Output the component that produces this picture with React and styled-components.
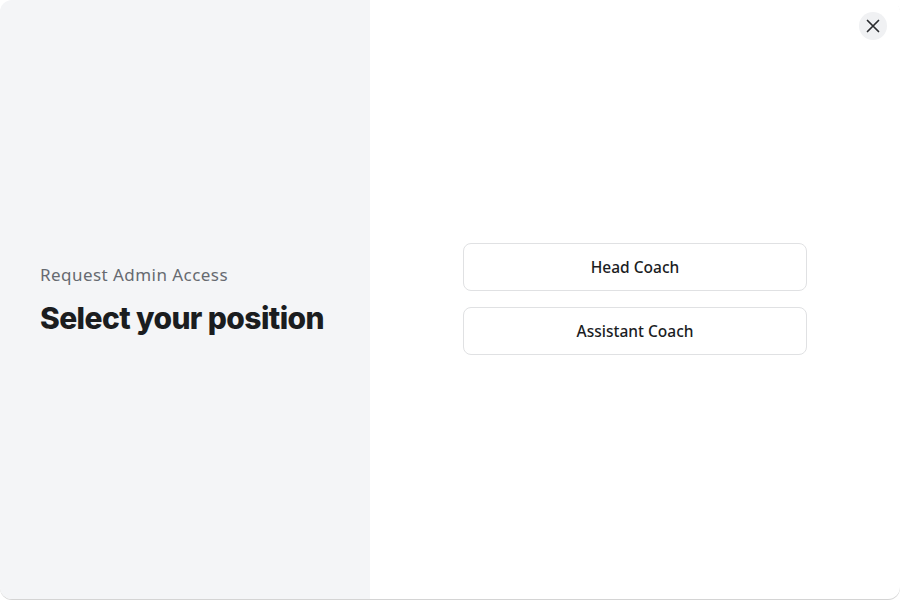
import React from "react";
import styled, { createGlobalStyle } from "styled-components";

const Global = createGlobalStyle`
  html, body { margin: 0; padding: 0; background: #ffffff; }
  body { font-family: "Noto Sans", Inter, sans-serif; }
  #root { width: 900px; height: 600px; }
`;

const Modal = styled.div`
  position: relative;
  width: 900px;
  height: 599px;
  display: flex;
  border-radius: 12px;
  overflow: hidden;
  background: #ffffff;
  box-shadow: 0 1px 0 #d4d4d4;
`;

const Side = styled.div`
  width: 370px;
  flex-shrink: 0;
  background: #f4f5f7;
  display: flex;
  flex-direction: column;
  justify-content: center;
  padding: 0 40px;
  box-sizing: border-box;
`;

const Eyebrow = styled.div`
  font-family: "Noto Sans", sans-serif;
  font-size: 17px;
  letter-spacing: 0.45px;
  color: #666a70;
  line-height: 24px;
  margin-top: 1px;
`;

const Title = styled.h1`
  margin: 11px 0 0;
  font-family: Inter, "Noto Sans", sans-serif;
  font-weight: 800;
  font-size: 30px;
  letter-spacing: -0.6px;
  line-height: 40px;
  color: #1b1d1f;
`;

const Main = styled.div`
  flex: 1;
  display: flex;
  flex-direction: column;
  align-items: center;
  justify-content: center;
  gap: 16px;
  padding-bottom: 2px;
`;

const Option = styled.button`
  width: 344px;
  height: 48px;
  border: 1px solid #e0e1e3;
  border-radius: 8px;
  background: #ffffff;
  font-family: "Noto Sans", sans-serif;
  font-size: 15.5px;
  font-weight: 500;
  color: #1b1d1f;
  cursor: pointer;
`;

const Close = styled.button`
  position: absolute;
  top: 12px;
  right: 13px;
  width: 28px;
  height: 28px;
  border-radius: 50%;
  border: none;
  background: #f0f1f3;
  display: flex;
  align-items: center;
  justify-content: center;
  padding: 0;
  cursor: pointer;
`;

export default function App() {
  return (
    <>
      <Global />
      <Modal>
        <Side>
          <Eyebrow>Request Admin Access</Eyebrow>
          <Title>Select your position</Title>
        </Side>
        <Main>
          <Option>Head Coach</Option>
          <Option>Assistant Coach</Option>
        </Main>
        <Close aria-label="Close">
          <svg width="16" height="16" viewBox="0 0 16 16" fill="none">
            <path d="M2.5 2.5L13.5 13.5M13.5 2.5L2.5 13.5" stroke="#2a2c2f" strokeWidth="1.7" strokeLinecap="round" />
          </svg>
        </Close>
      </Modal>
    </>
  );
}
